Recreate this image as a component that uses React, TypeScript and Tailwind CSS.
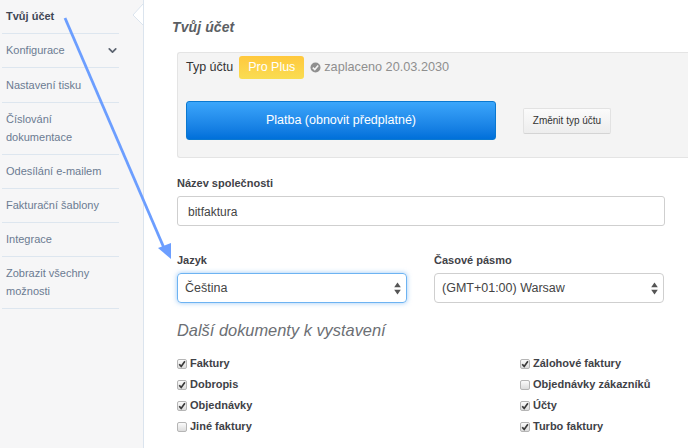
import React from 'react';
import { ChevronDown } from 'lucide-react';

const menu = [
  { label: 'Konfigurace', h: 'h-[34px]', chevron: true },
  { label: 'Nastavení tisku', h: 'h-[35px]' },
  { label: 'Číslování dokumentace', h: 'h-[52px]' },
  { label: 'Odesílání e-mailem', h: 'h-[34px]' },
  { label: 'Fakturační šablony', h: 'h-[34px]' },
  { label: 'Integrace', h: 'h-[34px]' },
  { label: 'Zobrazit všechny možnosti', h: 'h-[52px]' },
];

const leftDocs = [
  { label: 'Faktury', on: true },
  { label: 'Dobropis', on: true },
  { label: 'Objednávky', on: true },
  { label: 'Jiné faktury', on: false },
];

const rightDocs = [
  { label: 'Zálohové faktury', on: true },
  { label: 'Objednávky zákazníků', on: false },
  { label: 'Účty', on: true },
  { label: 'Turbo faktury', on: true },
];

function SelectArrows() {
  return (
    <svg width="7" height="13" viewBox="0 0 7 13" className="shrink-0">
      <path d="M3.5 0.5 L6.8 5.2 H0.2 Z" fill="#555" />
      <path d="M3.5 12.5 L6.8 7.8 H0.2 Z" fill="#555" />
    </svg>
  );
}

function Check({ label, on }: { label: string; on: boolean }) {
  return (
    <div className="flex h-[21px] items-center">
      <span className="flex h-[10px] w-[10px] shrink-0 items-center justify-center rounded-[2px] border border-[#b5b5b5] bg-gradient-to-b from-[#fbfbfb] to-[#dcdcdc]">
        {on && (
          <svg width="8" height="8" viewBox="0 0 8 8">
            <path d="M1.2 4.2 L3.2 6.4 L6.9 1.3" fill="none" stroke="#3a3a3a" strokeWidth="1.7" />
          </svg>
        )}
      </span>
      <span className="ml-[3px] text-[11px] font-bold text-[#3f4247]">{label}</span>
    </div>
  );
}

export default function App() {
  return (
    <div className="relative flex h-[448px] w-[688px] overflow-hidden bg-white font-['Liberation_Sans',Arial,sans-serif]">
      {/* Sidebar */}
      <div className="relative w-[144px] shrink-0 border-r border-[#dbe4ee] bg-[#f6f6f7] pl-[2px] pr-[24px]">
        <div className="flex h-[34px] items-center border-b border-[#dde6ef] pl-[4px] text-[11px] font-bold text-[#3f4654]">
          Tvůj účet
        </div>
        {menu.map(m => (
          <div
            key={m.label}
            className={`flex ${m.h} items-center justify-between border-b border-[#dde6ef] pb-[1px] pl-[4px] text-[11px] leading-[18px] text-[#6b7b92]`}
          >
            <span>{m.label}</span>
            {m.chevron && <ChevronDown size={13} strokeWidth={3.2} className="text-[#5c6470]" />}
          </div>
        ))}
        {/* notch */}
        <svg width="12" height="24" viewBox="0 0 12 24" className="absolute right-[-1px] top-[4px]">
          <path d="M11 0 L1 11 L11 21 Z" fill="#fff" />
          <path d="M11 0 L1 11 L11 21" fill="none" stroke="#dbe4ee" />
        </svg>
      </div>

      {/* Content */}
      <div className="w-[544px] shrink-0 pl-[33px] pr-[23px]">
        <h1 className="ml-[-5px] pt-[18px] text-[14px] font-bold italic leading-[18px] tracking-[0.1px] text-[#5b5e63]">Tvůj účet</h1>

        <div className="mt-[16px] mr-[-30px] h-[106px] rounded-l-[3px] border border-r-0 border-[#e4e4e4] bg-[#f4f4f4] pl-[8px] pt-[3px]">
          <div className="flex items-center text-[12.5px] text-[#333]">
            <span>Typ účtu</span>
            <span className="ml-[6px] flex h-[23px] w-[65px] items-center justify-center rounded-[3px] bg-gradient-to-b from-[#ffc83d] to-[#f9dd52] pb-[1px] text-white">Pro Plus</span>
            <svg width="11" height="11" viewBox="0 0 11 11" className="ml-[6px]">
              <circle cx="5.5" cy="5.5" r="5" fill="#8f8f8f" />
              <path d="M2.8 5.6 L4.8 7.6 L8.2 3.6" fill="none" stroke="#f4f4f4" strokeWidth="1.6" />
            </svg>
            <span className="ml-[3px] text-[12.7px] text-[#8f8f8f]">zaplaceno 20.03.2030</span>
          </div>
          <div className="mt-[22px] flex items-center">
            <div className="flex h-[39px] w-[310px] items-center justify-center rounded-[3px] border border-[#0a78d0] bg-gradient-to-b from-[#3ba6fb] to-[#0070da] pb-[1px] text-[12.5px] text-white">
              Platba (obnovit předplatné)
            </div>
            <div className="ml-[27px] flex h-[26px] w-[88px] items-center justify-center rounded-[2px] border border-[#e2e2e2] border-b-[#d4d4d4] bg-gradient-to-b from-[#fbfbfb] to-[#ededed] text-[10px] text-[#333]">
              Změnit typ účtu
            </div>
          </div>
        </div>

        <div className="mt-[19px] text-[11px] font-bold leading-[13px] text-[#3f4247]">Název společnosti</div>
        <div className="mt-[6px] flex h-[30px] items-center rounded-[3px] border border-[#cfcfcf] pl-[10px] pt-[1px] text-[12px] text-[#444]">
          bitfaktura
        </div>

        <div className="mt-[28px] flex gap-[27px]">
          <div className="w-[230px]">
            <div className="text-[11px] font-bold leading-[13px] text-[#3f4247]">Jazyk</div>
            <div className="mt-[6px] flex h-[30px] items-center justify-between rounded-[4px] border border-[#6db3f2] pl-[7px] pr-[5px] text-[12.5px] text-[#444] shadow-[0_0_5px_rgba(90,165,240,0.6)]">
              <span>Čeština</span>
              <SelectArrows />
            </div>
          </div>
          <div className="w-[230px]">
            <div className="text-[11px] font-bold leading-[13px] text-[#3f4247]">Časové pásmo</div>
            <div className="mt-[6px] flex h-[30px] items-center justify-between rounded-[4px] border border-[#cfcfcf] pl-[7px] pr-[5px] text-[12.5px] text-[#444]">
              <span>(GMT+01:00) Warsaw</span>
              <SelectArrows />
            </div>
          </div>
        </div>

        <h2 className="mt-[17px] text-[16.4px] italic leading-[20px] text-[#6c6f74]">Další dokumenty k vystavení</h2>

        <div className="mt-[13px] flex">
          <div className="w-[343px]">
            {leftDocs.map(d => <Check key={d.label} {...d} />)}
          </div>
          <div>
            {rightDocs.map(d => <Check key={d.label} {...d} />)}
          </div>
        </div>
      </div>

      {/* Annotation arrow */}
      <svg width="688" height="448" viewBox="0 0 688 448" className="pointer-events-none absolute left-0 top-0">
        <line x1="65" y1="18" x2="164" y2="248" stroke="#6c9eff" strokeWidth="2.8" />
        <path d="M171 259 L158 248 L171 243 Z" fill="#6c9eff" />
      </svg>
    </div>
  );
}
